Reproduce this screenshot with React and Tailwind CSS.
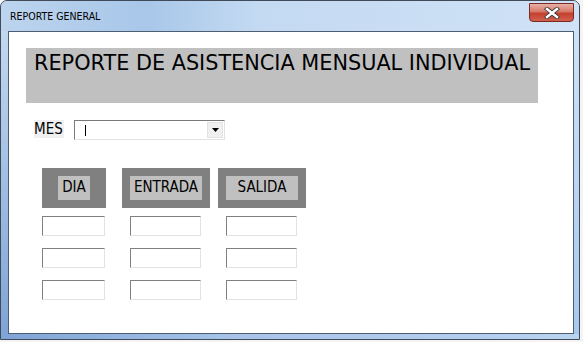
import React from 'react';

const ui = { fontFamily: '"DejaVu Sans Condensed", "DejaVu Sans", sans-serif' };
const ancho = { fontFamily: '"DejaVu Sans", sans-serif' };

const Caja = ({ w }) => (
  <div
    className={`h-[20px] bg-white border border-t-[#808080] border-l-[#808080] border-b-[#e3e3e3] border-r-[#e3e3e3] ${w}`}
  />
);

const Encabezado = ({ outer, inner, label }) => (
  <div className={`h-[40px] bg-[#808080] pt-[8px] flex justify-center ${outer}`}>
    <div className={`h-[24px] bg-[#c0c0c0] flex items-center justify-center text-[15px] leading-[20px] pb-[2px] text-black ${inner}`}>
      {label}
    </div>
  </div>
);

const App = () => {
  const filas = [0, 1, 2];

  return (
    <div className="w-[583px] h-[342px] bg-[#f4f4f4] overflow-hidden" style={ui}>
      <div className="w-[580px] h-[340px] border border-[#404a58] rounded-t-[7px] overflow-hidden flex flex-col bg-[#b5cfec]">
        {/* Barra de titulo */}
        <div className="h-[30px] shrink-0 flex items-start justify-between bg-[linear-gradient(90deg,#bcd4ee_0%,#a8c7e9_25%,#c4daf2_45%,#cfe2f6_100%)]">
          <span className="text-[10.5px] text-black mt-[10px] ml-[9px] leading-none">REPORTE GENERAL</span>
          <div className="mt-[2px] mr-[5px] w-[45px] h-[19px] rounded-b-[4px] border border-[#7a2a22] bg-[linear-gradient(180deg,#e8b0a6_0%,#d77868_45%,#c4402e_55%,#d2604e_100%)] flex items-center justify-center">
            <svg width="16" height="12" viewBox="0 0 16 12">
              <path d="M3 2 L13 10 M13 2 L3 10" stroke="#3b3b3b" strokeWidth="4.2" strokeLinecap="square" />
              <path d="M3 2 L13 10 M13 2 L3 10" stroke="#ffffff" strokeWidth="2.4" strokeLinecap="square" />
            </svg>
          </div>
        </div>

        {/* Cuerpo */}
        <div className="flex flex-1 min-h-0">
          <div className="w-[7px] shrink-0 bg-[linear-gradient(180deg,#c2d8f0,#7fa4d6)]" />
          <div className="w-[566px] h-[303px] shrink-0 border border-[#4d5d72] bg-white pl-[17px] pt-[16px]">
            <div className="w-[512px] h-[55px] bg-[#c0c0c0] pl-[8px] pt-[3px]">
              <span className="text-[20.8px] text-black leading-[24px]" style={ancho}>
                REPORTE DE ASISTENCIA MENSUAL INDIVIDUAL
              </span>
            </div>

            <div className="flex items-start mt-[17px] ml-[8px]">
              <span className="h-[18px] w-[30px] bg-[#f0f0f0] text-[15px] leading-[18px] text-black">MES</span>
              <div className="ml-[10px] w-[151px] h-[20px] border border-t-[#7a7a7a] border-l-[#7a7a7a] border-b-[#e3e3e3] border-r-[#e3e3e3] bg-white flex items-center justify-between pl-[10px] pr-[1px]">
                <span className="w-px h-[11px] bg-black" />
                <div className="w-[16px] h-[16px] bg-[#f0f0f0] border border-[#e3e3e3] flex items-center justify-center">
                  <svg width="7" height="4" viewBox="0 0 7 4">
                    <path d="M0 0 H7 L3.5 4 Z" fill="#000" />
                  </svg>
                </div>
              </div>
            </div>

            <div className="ml-[16px] mt-[28px]">
              <div className="flex">
                <Encabezado outer="w-[64px]" inner="w-[32px]" label="DIA" />
                <Encabezado outer="w-[88px] ml-[16px]" inner="w-[72px]" label="ENTRADA" />
                <Encabezado outer="w-[88px] ml-[8px]" inner="w-[72px]" label="SALIDA" />
              </div>
              <div className="flex flex-col gap-[12px] mt-[8px]">
                {filas.map((f) => (
                  <div key={f} className="flex">
                    <Caja w="w-[63px]" />
                    <div className="ml-[25px]"><Caja w="w-[71px]" /></div>
                    <div className="ml-[25px]"><Caja w="w-[71px]" /></div>
                  </div>
                ))}
              </div>
            </div>
          </div>
          <div className="flex-1 bg-[linear-gradient(180deg,#cfe2f6,#a8c8ee)]" />
        </div>
        <div className="h-[5px] shrink-0 bg-[linear-gradient(90deg,#7fa4d6,#a7c4e8_40%,#b9d3f0)]" />
      </div>
    </div>
  );
};

export default App;
